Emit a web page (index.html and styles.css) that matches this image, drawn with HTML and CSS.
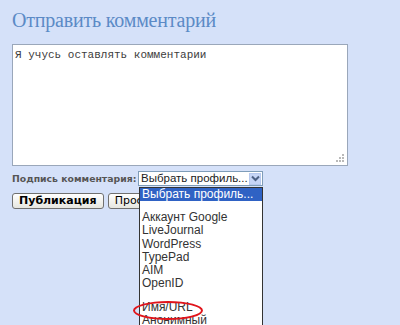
FILE: index.html
```html
<!DOCTYPE html>
<html>
<head>
  <title>Отправить комментарий</title>
  <link rel="stylesheet" href="styles.css">
</head>
<body>

  <!--TITLE-->
  <h2 class="title">Отправить комментарий</h2>

  <!--Comment box-->
  <div class="comment-box">
    Я учусь оставлять комментарии
    <svg class="grip" width="9" height="9" viewBox="0 0 9 9">
      <rect x="6" y="0" width="2" height="2" fill="#b9b9b9"/>
      <rect x="3" y="3" width="2" height="2" fill="#b9b9b9"/>
      <rect x="6" y="3" width="2" height="2" fill="#b9b9b9"/>
      <rect x="0" y="6" width="2" height="2" fill="#b9b9b9"/>
      <rect x="3" y="6" width="2" height="2" fill="#b9b9b9"/>
      <rect x="6" y="6" width="2" height="2" fill="#b9b9b9"/>
    </svg>
  </div>

  <!--Signature row with open dropdown-->
  <div class="sign-row">
    <span class="sign-label">Подпись комментария:</span>
    <div class="select-wrap">
      <div class="select-box">
        <span class="select-text">Выбрать профиль...</span>
        <span class="select-arrow">
          <svg width="9" height="7" viewBox="0 0 9 7"><path d="M1 1.5 L4.5 5 L8 1.5" fill="none" stroke="#4d6185" stroke-width="2"/></svg>
        </span>
      </div>
      <ul class="select-list">
        <li class="selected">Выбрать профиль...</li>
        <li class="blank"></li>
        <li>Аккаунт Google</li>
        <li>LiveJournal</li>
        <li>WordPress</li>
        <li>TypePad</li>
        <li>AIM</li>
        <li>OpenID</li>
        <li class="blank"></li>
        <li>Имя/URL</li>
        <li>Анонимный</li>
      </ul>
      <!-- red mark over the Name/URL option -->
      <div class="mark"></div>
    </div>
  </div>

  <!--Buttons-->
  <div class="button-row">
    <button class="btn">Публикация</button>
    <button class="btn">Просмотр</button>
  </div>

</body>
</html>
```

FILE: styles.css
```css
html {
  height: 100%;
}
body {
  background-color: #d5e1f9;
  margin: 0;
  padding: 9px 12px 0 12px;
  min-height: 100%;
  box-sizing: border-box;
  font-family: "Liberation Sans", Arial, sans-serif;
  overflow: hidden;
}
.title {
  font-family: "Liberation Serif", "Times New Roman", serif;
  font-weight: normal;
  font-size: 20px;
  letter-spacing: -0.2px;
  color: #5b8ac6;
  margin: 0;
  line-height: 22px;
}
.comment-box {
  position: relative;
  margin-top: 13px;
  width: 330px;
  height: 114px;
  background-color: white;
  border: 1px solid #9aa7ba;
  padding: 3px 2px;
  font-family: "Liberation Mono", "Courier New", monospace;
  font-size: 11px;
  line-height: 14px;
  color: #3c3c3c;
}
.grip {
  position: absolute;
  right: 2px;
  bottom: 2px;
}
.sign-row {
  display: flex;
  align-items: center;
  margin-top: 5px;
}
.sign-label {
  flex-shrink: 0;
  white-space: nowrap;
  font-family: "DejaVu Sans", Verdana, sans-serif;
  font-weight: bold;
  font-size: 9.3px;
  color: #555;
  width: 126px;
}
.select-wrap {
  position: relative;
  z-index: 2;
}
.select-box {
  display: flex;
  align-items: center;
  justify-content: space-between;
  width: 123px;
  height: 13px;
  background-color: white;
  border: 1px solid #7f9db9;
  font-size: 11.5px;
  color: #222;
}
.select-text {
  padding-left: 2px;
  line-height: 13px;
  white-space: nowrap;
  overflow: hidden;
}
.select-arrow {
  flex-shrink: 0;
  display: flex;
  align-items: center;
  justify-content: center;
  width: 12px;
  height: 12px;
  margin-right: 1px;
  background-color: #c6d5f7;
  border: 1px solid #b7c9ef;
  box-sizing: border-box;
}
.select-list {
  position: absolute;
  top: 16px;
  left: 1px;
  width: 122px;
  margin: 0;
  padding: 0;
  list-style: none;
  background-color: white;
  border: 1px solid #333;
  border-bottom: none;
  font-size: 12px;
  color: #333;
}
.select-list li {
  height: 13.3px;
  line-height: 13.3px;
  padding-left: 2px;
  white-space: nowrap;
}
.select-list li.selected {
  background-color: #2f62c4;
  color: white;
  height: 13px;
}
.select-list li.blank {
  height: 10px;
}
.mark {
  position: absolute;
  left: -5px;
  top: 130px;
  width: 66px;
  height: 15px;
  border: 2px solid #e0141b;
  border-radius: 50%;
}
.button-row {
  display: flex;
  gap: 4px;
  margin-top: 7px;
}
.btn {
  font-family: "DejaVu Sans", Verdana, sans-serif;
  font-weight: bold;
  font-size: 11px;
  color: black;
  height: 16px;
  padding: 0 6px;
  background: linear-gradient(#ffffff, #e6e6e0);
  border: 1px solid #707070;
  border-radius: 3px;
  line-height: 14px;
}
.btn + .btn {
  font-weight: normal;
}
```
